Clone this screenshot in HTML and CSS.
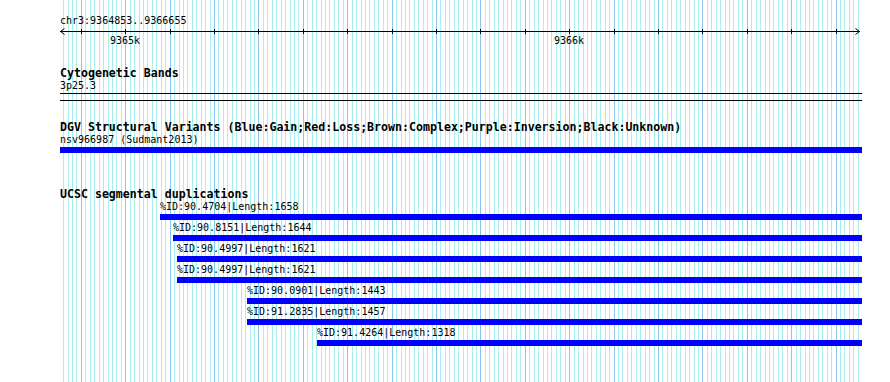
FILE: index.html
```html
<!DOCTYPE html>
<html lang="en">
<head>
    <meta charset="UTF-8">
    <meta name="viewport" content="width=device-width, initial-scale=1.0">
    <title>chr3:9364853..9366655</title>
    <link rel="stylesheet" href="styles.css">
</head>
<body>
    <div class="browser">
        <svg class="grid" id="grid" width="890" height="382"></svg>

        <div class="locus">chr3:9364853..9366655</div>
        <div class="ruler">
            <svg class="scale" id="scale" width="802" height="8"></svg>
            <div class="ticks">
                <span class="tick-label" style="left: 65px">9365k</span>
                <span class="tick-label" style="left: 509px">9366k</span>
            </div>
        </div>

        <div class="track cyto">
            <div class="track-name">Cytogenetic Bands</div>
            <div class="feature-name">3p25.3</div>
            <div class="band"></div>
        </div>

        <div class="track dgv">
            <div class="track-name">DGV Structural Variants (Blue:Gain;Red:Loss;Brown:Complex;Purple:Inversion;Black:Unknown)</div>
            <div class="feature-name">nsv966987 (Sudmant2013)</div>
            <div class="bar"></div>
        </div>

        <div class="track segdup">
            <div class="track-name">UCSC segmental duplications</div>
            <div class="dup" style="margin-left: 100px">
                <div class="feature-name">%ID:90.4704|Length:1658</div>
                <div class="bar"></div>
            </div>
            <div class="dup" style="margin-left: 113px">
                <div class="feature-name">%ID:90.8151|Length:1644</div>
                <div class="bar"></div>
            </div>
            <div class="dup" style="margin-left: 117px">
                <div class="feature-name">%ID:90.4997|Length:1621</div>
                <div class="bar"></div>
            </div>
            <div class="dup" style="margin-left: 117px">
                <div class="feature-name">%ID:90.4997|Length:1621</div>
                <div class="bar"></div>
            </div>
            <div class="dup" style="margin-left: 187px">
                <div class="feature-name">%ID:90.0901|Length:1443</div>
                <div class="bar"></div>
            </div>
            <div class="dup" style="margin-left: 187px">
                <div class="feature-name">%ID:91.2835|Length:1457</div>
                <div class="bar"></div>
            </div>
            <div class="dup" style="margin-left: 257px">
                <div class="feature-name">%ID:91.4264|Length:1318</div>
                <div class="bar"></div>
            </div>
        </div>
    </div>

    <script>
        const NS = "http://www.w3.org/2000/svg";
        const start = 9364853;
        const end = 9366655;
        const viewLeft = 60;
        const viewWidth = 800;
        const grid = document.getElementById("grid");
        const scale = document.getElementById("scale");

        function bpToX(bp) {
            return viewLeft + (bp - start) * viewWidth / (end - start);
        }

        function addLine(svg, x1, y1, x2, y2, cls) {
            const line = document.createElementNS(NS, "line");
            line.setAttribute("x1", x1);
            line.setAttribute("y1", y1);
            line.setAttribute("x2", x2);
            line.setAttribute("y2", y2);
            line.setAttribute("class", cls);
            svg.appendChild(line);
        }

        // vertical grid, every 10bp, darker every 100bp
        for (let bp = Math.ceil(start / 10) * 10; bp <= end; bp += 10) {
            const x = Math.round(bpToX(bp)) + 0.5;
            const major = bp % 100 === 0;
            addLine(grid, x, 0, x, 382, major ? "gridline major" : "gridline");
            if (major) {
                const sx = x - viewLeft;
                addLine(scale, sx, 2, sx, 7, "tick");
            }
        }

        // ruler line with arrow heads at both ends
        addLine(scale, 0, 4.5, 800, 4.5, "axis");
        addLine(scale, 0.5, 4.5, 4.5, 1.5, "axis");
        addLine(scale, 0.5, 4.5, 4.5, 7.5, "axis");
        addLine(scale, 799.5, 4.5, 795.5, 1.5, "axis");
        addLine(scale, 799.5, 4.5, 795.5, 7.5, "axis");
    </script>
</body>
</html>
```

FILE: styles.css
```css
body {
    margin: 0;
    background: #fff;
    color: #000;
    font-family: "DejaVu Sans Mono", monospace;
    font-size: 10px;
    line-height: 12px;
}
.browser {
    position: relative;
    width: 802px;
    height: 382px;
    padding-left: 60px;
    overflow: hidden;
}
.grid {
    position: absolute;
    left: 0;
    top: 0;
    z-index: -1;
}
.gridline {
    stroke: #aaeeee;
    stroke-width: 1;
}
.gridline.major {
    stroke: #8cc6ec;
}
.locus {
    padding-top: 15px;
    white-space: nowrap;
}
.ruler {
    position: relative;
}
.scale {
    display: block;
    overflow: visible;
}
.axis, .tick {
    stroke: #000;
    stroke-width: 1;
}
.ticks {
    position: relative;
    height: 12px;
}
.tick-label {
    position: absolute;
    top: 0;
    transform: translateX(-50%);
}
.track {
    margin-top: 20px;
}
.track.segdup {
    margin-top: 35px;
}
.track-name {
    font-weight: bold;
    font-size: 11.6px;
    line-height: 13px;
    white-space: nowrap;
}
.feature-name {
    white-space: nowrap;
}
.band {
    margin-top: 1px;
    height: 6px;
    border-top: 1px solid #000;
    border-bottom: 1px solid #000;
}
.bar {
    margin-top: 1px;
    height: 6px;
    background: #0000ff;
}
.dup {
    margin-bottom: 2px;
}
```
